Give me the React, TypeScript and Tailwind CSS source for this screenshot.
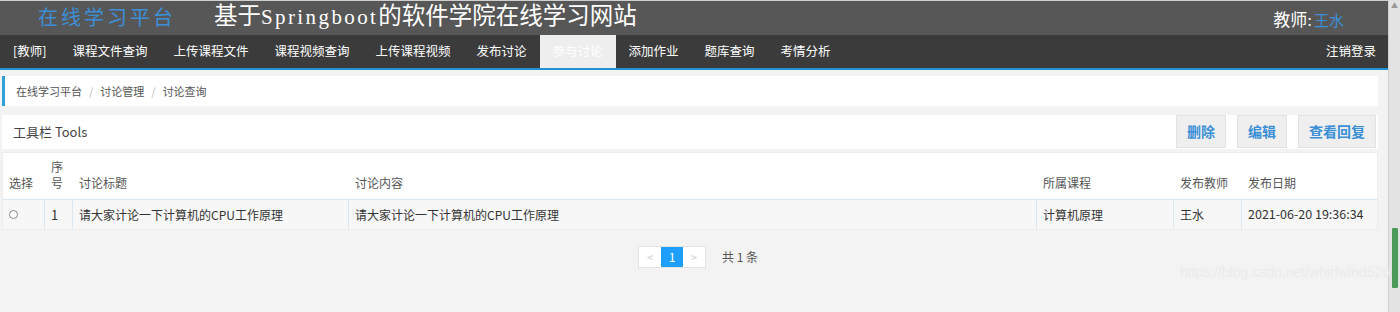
import React from "react";

const navItems = [
  "[教师]",
  "课程文件查询",
  "上传课程文件",
  "课程视频查询",
  "上传课程视频",
  "发布讨论",
  "参与讨论",
  "添加作业",
  "题库查询",
  "考情分析",
];

const cols = [
  { key: "sel", label: "选择", w: "w-[42px]" },
  { key: "no", label: "序号", w: "w-[28px]" },
  { key: "title", label: "讨论标题", w: "w-[276px]" },
  { key: "content", label: "讨论内容", w: "w-[688px]" },
  { key: "course", label: "所属课程", w: "w-[137px]" },
  { key: "teacher", label: "发布教师", w: "w-[68px]" },
  { key: "date", label: "发布日期", w: "flex-1" },
];

const rows = [
  {
    no: "1",
    title: "请大家计论一下计算机的CPU工作原理",
    content: "请大家计论一下计算机的CPU工作原理",
    course: "计算机原理",
    teacher: "王水",
    date: "2021-06-20 19:36:34",
  },
];

const sans = "font-['Microsoft_YaHei','Noto_Sans_CJK_SC',sans-serif]";
const serif = "font-['Liberation_Serif','Noto_Sans_CJK_SC',serif]";

export default function App() {
  return (
    <div className={`flex w-[1400px] h-[312px] overflow-hidden bg-[#f3f3f3] ${sans}`}>
      <div className="relative flex-1 flex flex-col">
        {/* Header */}
        <div className="h-[35px] bg-[#575757] border-t border-[#cfcfcf] flex items-center pl-[38px] pr-[44px]">
          <span className={`text-[#3d8fd8] text-[20px] tracking-[3px] ${serif}`}>在线学习平台</span>
          <span className={`ml-[38px] -mt-[2px] text-white text-[23.5px] ${serif}`}>
            基于<span className="text-[21px] tracking-[2.4px]">Springboot</span>的软件学院在线学习网站
          </span>
          <span className={`ml-auto mt-[6px] text-[17px] text-white ${serif}`}>
            教师:<span className="text-[#3d8fd8] text-[15px] ml-[2px]">王水</span>
          </span>
        </div>

        {/* Nav */}
        <div className="h-[35px] bg-[#3b3b3b] border-b-2 border-[#1f93cf] flex">
          {navItems.map((item) => (
            <div
              key={item}
              className={`px-[13px] flex items-center text-[12.5px] ${
                item === "参与讨论" ? "bg-[#eeeeee] text-white" : "text-white"
              }`}
            >
              {item}
            </div>
          ))}
          <div className="ml-auto pr-[12px] flex items-center text-[12.5px] text-white">注销登录</div>
        </div>

        <div className="pl-[2px] pr-[10px]">
          {/* Breadcrumb */}
          <div className="mt-[6px] h-[30px] bg-white border-l-[3px] border-[#2ea0da] flex items-center pl-[11px] text-[11px] text-[#555]">
            在线学习平台
            <span className="mx-[7px] text-[#bbb]">/</span>
            讨论管理
            <span className="mx-[7px] text-[#bbb]">/</span>
            讨论查询
          </div>

          {/* Tools */}
          <div className="mt-[9px] h-[34px] bg-white flex items-center pl-[11px] pr-[2px]">
            <span className="text-[13px] text-[#444]">工具栏 Tools</span>
            <div className="ml-auto flex gap-[11px] h-full">
              {["删除", "编辑", "查看回复"].map((b) => (
                <div
                  key={b}
                  className="h-[33px] px-[10px] bg-[#efefef] border border-[#e2e2e2] flex items-center text-[14px] font-semibold text-[#3a8fd6]"
                >
                  {b}
                </div>
              ))}
            </div>
          </div>

          {/* Table */}
          <div className="mt-[3px] bg-white border border-[#ececec]">
            <div className="flex h-[46px] items-end pb-[8px] text-[12px] text-[#555]">
              {cols.map((c) => (
                <div key={c.key} className={`${c.w} pl-[6px] leading-[16px] shrink-0`}>
                  {c.key === "no" ? (
                    <>
                      序<br />号
                    </>
                  ) : (
                    c.label
                  )}
                </div>
              ))}
            </div>
            {rows.map((r) => (
              <div key={r.no} className="flex h-[30px] bg-[#f7f7f7] border-t border-[#d9e7f1] text-[12px] text-[#333]">
                <div className="w-[42px] shrink-0 flex items-center pl-[6px] border-r border-[#d9e7f1]">
                  <span className="w-[9px] h-[9px] rounded-full border border-[#888] bg-white" />
                </div>
                <div className="w-[28px] shrink-0 flex items-center pl-[6px] border-r border-[#d9e7f1] text-[13px]">{r.no}</div>
                <div className="w-[276px] shrink-0 flex items-center pl-[6px] border-r border-[#d9e7f1]">{r.title}</div>
                <div className="w-[688px] shrink-0 flex items-center pl-[6px] border-r border-[#d9e7f1]">{r.content}</div>
                <div className="w-[137px] shrink-0 flex items-center pl-[6px] border-r border-[#d9e7f1]">{r.course}</div>
                <div className="w-[68px] shrink-0 flex items-center pl-[6px] border-r border-[#d9e7f1]">{r.teacher}</div>
                <div className="flex-1 flex items-center pl-[6px] text-[12.5px]">{r.date}</div>
              </div>
            ))}
          </div>

          {/* Pagination */}
          <div className="mt-[16px] flex justify-center items-center pl-[16px]">
            <div className="flex h-[22px] border border-[#e2e2e2] bg-white text-[11px]">
              <div className="w-[22px] flex items-center justify-center text-[#ccc]">&lt;</div>
              <div className="w-[22px] flex items-center justify-center bg-[#1e9fff] text-white text-[12px]">1</div>
              <div className="w-[22px] flex items-center justify-center text-[#ccc]">&gt;</div>
            </div>
            <span className="ml-[16px] text-[12px] text-[#555]">共 1 条</span>
          </div>
        </div>

        {/* Watermark */}
        <div className="absolute right-[-2px] top-[262px] text-[14px] text-[#ebebeb] font-['Liberation_Sans',sans-serif]">
          https://blog.csdn.net/whirlwind526
        </div>
      </div>

      {/* Scrollbar */}
      <div className="w-[12px] bg-[#e3e3e3] border-l border-[#d0d0d0] flex flex-col items-center">
        <span className="text-[7px] text-[#999] leading-[10px]">▲</span>
        <div className="mt-[218px] w-[6px] h-[60px] bg-[#4a9a5a] rounded-[1px]" />
      </div>
    </div>
  );
}
